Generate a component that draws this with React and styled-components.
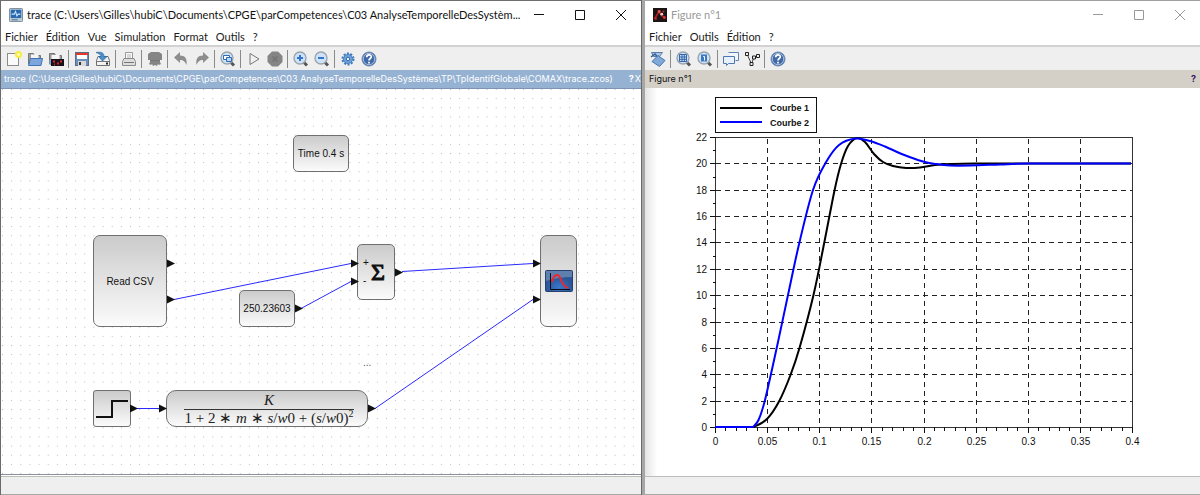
import React from 'react';
import styled, { createGlobalStyle } from 'styled-components';

const GlobalStyle = createGlobalStyle`
  * {
    box-sizing: border-box;
  }
  body {
    margin: 0;
    background: #a6a6a6;
    font-family: Lato, 'Open Sans', sans-serif;
  }
`;

const Desktop = styled.main`
  display: grid;
  grid-template-columns: 642fr 555fr;
  gap: 3px;
  min-height: 100vh;
`;

const Window = styled.section`
  display: flex;
  flex-direction: column;
  min-width: 0;
  background: #fff;
  border-top: 1px solid ${props => (props.$active ? '#6e6e6e' : '#a0a0a0')};
  border-left: ${props => (props.$active ? '1px solid #6a6a6a' : '0')};
  border-right: ${props => (props.$active ? '1px solid #6a6a6a' : '0')};
`;

const TitleBar = styled.header`
  display: flex;
  align-items: center;
  height: 28px;
  padding-left: 8px;
  color: ${props => (props.$active ? '#111' : '#999')};
  h1 {
    flex: 1;
    min-width: 0;
    margin: 0 -8px 0 4px;
    white-space: nowrap;
    font-size: 11px;
    font-weight: 400;
    line-height: 16px;
  }
`;

const WindowButton = styled.button`
  display: flex;
  align-items: center;
  justify-content: center;
  width: 41px;
  height: 27px;
  padding: 0;
  border: 0;
  background: transparent;
  color: inherit;
`;

const MenuBar = styled.nav`
  display: flex;
  gap: 8px;
  height: 18px;
  padding: 0 4px;
  border-bottom: 2px solid #d2d2d2;
  button {
    padding: 0;
    border: 0;
    background: transparent;
    color: #1a1a1a;
    font: inherit;
    font-size: 11px;
    line-height: 16px;
  }
`;

const ToolBar = styled.div`
  display: flex;
  align-items: center;
  height: 23px;
  padding-left: 2px;
  background: #efefef;
`;

const ToolButton = styled.button`
  display: flex;
  align-items: center;
  justify-content: center;
  width: 21px;
  height: 21px;
  padding: 0;
  border: 0;
  background: transparent;
`;

const Separator = styled.span`
  width: 1px;
  height: 18px;
  margin: 0 2px;
  background: #8a8a8a;
`;

const InfoBar = styled.div`
  display: flex;
  align-items: center;
  height: ${props => (props.$active ? 19 : 18)}px;
  padding: 0 ${props => (props.$active ? 0 : 3)}px 0 ${props => (props.$active ? 3 : 4)}px;
  overflow: hidden;
  white-space: nowrap;
  font-family: Inter, 'Liberation Sans', sans-serif;
  font-size: 9px;
  line-height: 16px;
  color: ${props => (props.$active ? '#fff' : '#111')};
  background: ${props => (props.$active ? '#96b2d3' : '#d4d0c8')};
  border-bottom: ${props => (props.$active ? '1px solid #7f94b4' : '0')};
  span {
    flex: 1;
    min-width: 0;
    overflow: hidden;
  }
  button {
    padding: 0 1px;
    border: 0;
    background: transparent;
    color: ${props => (props.$active ? '#fff' : '#3b1260')};
    font: inherit;
    font-weight: 700;
  }
  button + button {
    padding: 0;
    font-weight: 400;
  }
`;

const StatusBar = styled.footer`
  height: 19px;
  background: #efefef;
  border-top: 1px solid #bdbdbd;
  border-bottom: 1px solid #a8a8a8;
`;

const Canvas = styled.div`
  position: relative;
  flex: 1;
  min-height: 385px;
  margin-bottom: 1px;
  overflow: hidden;
  border-bottom: 1px solid #8d919e;
  font-family: 'Liberation Sans', Arial, sans-serif;
  font-size: 10px;
  color: #111;
`;

const Layer = styled.svg`
  position: absolute;
  top: 0;
  left: 0;
  width: 100%;
  height: 100%;
`;

const Block = styled.div`
  position: absolute;
  left: ${props => props.$x}px;
  top: ${props => props.$y}px;
  width: ${props => props.$w}px;
  height: ${props => props.$h}px;
  display: flex;
  align-items: center;
  justify-content: center;
  border: 1px solid #707070;
  border-radius: ${props => props.$radius || 5}px;
  background: linear-gradient(#cbcbcb, #fbfbfb);
  white-space: nowrap;
`;

const Signs = styled.div`
  display: flex;
  flex-direction: column;
  gap: 6px;
  width: 8px;
  line-height: 12px;
`;

const Sigma = styled.div`
  padding-right: 4px;
  font-family: 'Liberation Serif', serif;
  font-size: 24px;
  line-height: 32px;
  -webkit-text-stroke: 1px #111;
`;

const Fraction = styled.div`
  display: flex;
  flex-direction: column;
  align-items: center;
  padding: 1px 0 0 4px;
  font-family: 'Liberation Serif', serif;
  font-size: 15px;
  line-height: 17px;
  color: #222;
  div + div {
    padding: 0 1px;
    border-top: 1px solid #333;
  }
  sup {
    font-size: 10px;
    line-height: 1px;
  }
`;

const Note = styled.div`
  position: absolute;
  left: 362px;
  top: 268px;
  color: #555;
`;

const Figure = styled.div`
  flex: 1;
  background: linear-gradient(90deg, #e4e4e4, #fff 12px);
  svg {
    display: block;
    width: 100%;
  }
  text {
    font-family: 'Liberation Sans', Arial, sans-serif;
    font-size: 10px;
    fill: #111;
  }
  .legend text {
    font-size: 9px;
    font-weight: 700;
  }
`;

const Icon = ({ children, size = 16 }) => (
  <svg width={size} height={size} viewBox="0 0 16 16" fill="none" aria-hidden="true">
    {children}
  </svg>
);

const Lens = ({ children }) => (
  <Icon>
    <path d="M10.5 11l3.5 3.5" stroke="#555" strokeWidth="3" />
    <circle cx="7" cy="7" r="6" fill="#cfe3f8" stroke="#9aa4ae" strokeWidth="1.4" />
    {children}
  </Icon>
);

const icons = {
  new: (
    <Icon>
      <rect x="1.5" y="2.5" width="11" height="12" fill="#fafafa" stroke="#8c8c8c" />
      <circle cx="12.5" cy="3.5" r="3.5" fill="#f5ee3c" />
      <circle cx="12.5" cy="3.5" r="1.5" fill="#fffcc0" />
    </Icon>
  ),
  open: (
    <Icon>
      <path d="M1.5 13V2.5h5l1 2h6V9" fill="#9b9b9b" stroke="#757575" />
      <path d="M4 3.5h7.5v5H4z" fill="#f6f6f6" />
      <path d="M3.5 7.5h12L14 14.5H1.5z" fill="#7da7dc" stroke="#4273b5" />
    </Icon>
  ),
  demo: (
    <Icon>
      <path d="M1.5 13V2.5h5l1 2h6V9" fill="#9b9b9b" stroke="#757575" />
      <path d="M3.5 4h8v5h-8z" fill="#f6f6f6" />
      <path d="M1.5 9h3v5h-3z" fill="#7da7dc" />
      <rect x="3" y="8" width="13" height="7" fill="#16121c" />
      <path d="M5 10.5h2M9 12.5h2M12 10.5h2M6 13.5h1" stroke="#e02424" strokeWidth="2" />
    </Icon>
  ),
  save: (
    <Icon>
      <rect x="1.5" y="1.5" width="13" height="13" fill="#6b8fbd" stroke="#5b6c84" />
      <rect x="3" y="2" width="10" height="6" fill="#fff" />
      <path d="M2 3h12" stroke="#e23b2e" strokeWidth="2" />
      <rect x="4" y="10" width="8" height="5" fill="#d9d9d9" />
      <path d="M6 11v3" stroke="#333" strokeWidth="2" />
    </Icon>
  ),
  saveAs: (
    <Icon>
      <path d="M3 5.5h10l1.5 4v5h-13v-5z" fill="#f2f2f2" stroke="#6f6f6f" />
      <path d="M2 10.5h12" stroke="#777" />
      <path d="M11 12.5h2" stroke="#222" strokeWidth="2" />
      <path d="M1 1.5c5-1 8 0 8 4h3L7.5 10 3.5 5.5H6C6 3.5 4 2.5 1 1.5z" fill="#4b8fcb" stroke="#2b659f" strokeWidth=".7" />
    </Icon>
  ),
  print: (
    <Icon>
      <path d="M4.5 8V1.5h7V8" fill="#fafafa" stroke="#999" />
      <path d="M6 4h4M6 6h4" stroke="#b5b5b5" />
      <path d="M3 7.5h10l1.5 3v4h-13v-4z" fill="#ddd" stroke="#8b8b8b" />
      <path d="M3 11.5h10" stroke="#777" />
    </Icon>
  ),
  remove: (
    <Icon>
      <path d="M1 3l3-2h8l3 2v6h-2v2l1 2-2 1-1-1-1 2-2-1-2 1-1-2-1 1-2-1 1-2V9H1z" fill="#858585" />
      <path d="M3 9.5h10" stroke="#777" />
    </Icon>
  ),
  undo: (
    <Icon>
      <path d="M1 6.5L7 1v3.5c5 0 7.5 3 6.5 9.5C12 10.5 10.5 9 7 9v3z" fill="#8d8d8d" />
    </Icon>
  ),
  redo: (
    <Icon>
      <path d="M15 6.5L9 1v3.5C4 4.5 1.5 7.5 2.5 14 4 10.5 5.5 9 9 9v3z" fill="#8d8d8d" />
    </Icon>
  ),
  fit: (
    <Lens>
      <path d="M3.5 4.5h6v4h-6z" fill="#fff" stroke="#2e6bb5" />
      <path d="M6.5 6.5h5v4h-5z" fill="#bcd7f5" stroke="#2e6bb5" />
    </Lens>
  ),
  play: (
    <Icon>
      <path d="M4 2.5l9 5.5-9 5.5z" fill="#f1f1f1" stroke="#777" />
    </Icon>
  ),
  stop: (
    <Icon>
      <path d="M5 .5h6L15.5 5v6L11 15.5H5L.5 11V5z" fill="#858585" />
      <path d="M5.5 5.5l5 5M10.5 5.5l-5 5" stroke="#737373" strokeWidth="1.5" />
    </Icon>
  ),
  zoomIn: (
    <Lens>
      <path d="M4 7h6M7 4v6" stroke="#2f76cc" strokeWidth="2" />
    </Lens>
  ),
  zoomOut: (
    <Lens>
      <path d="M4 7h6" stroke="#2f76cc" strokeWidth="2" />
    </Lens>
  ),
  settings: (
    <Icon>
      <circle cx="8" cy="8" r="5.5" stroke="#3e78bd" strokeWidth="2" strokeDasharray="2 1.45" />
      <circle cx="8" cy="8" r="4.5" fill="#6fa0d8" stroke="#4780c3" />
      <circle cx="8" cy="8" r="1.7" fill="#e7f0fa" stroke="#386daf" />
    </Icon>
  ),
  help: (
    <Icon>
      <circle cx="8" cy="8" r="7" fill="#3e68a8" stroke="#6c87ae" />
      <circle cx="8" cy="8" r="5.7" stroke="#c4d4ea" strokeWidth=".8" />
      <path d="M5.7 6.2c0-3 4.6-3 4.6-.4C10.3 7.5 8 7.5 8 9.5M8 10.8v1.7" stroke="#fff" strokeWidth="1.7" />
    </Icon>
  ),
  rotate: (
    <Icon>
      <path d="M1.5 1.5h11l-3 4h-6z" fill="#a9c6e8" stroke="#5b7ba5" />
      <path d="M1 6l4-3 2.5 3" stroke="#345c90" strokeWidth="1.3" />
      <path d="M8 4.5l7 5-5.5 6-7.5-5z" fill="#80a8d9" stroke="#4a76ad" />
    </Icon>
  ),
  area: (
    <Lens>
      <path d="M3.5 3.5h7v7h-7zM3.5 6h7M3.5 8.3h7M6 3.5v7M8.3 3.5v7" stroke="#3467a9" />
    </Lens>
  ),
  original: (
    <Lens>
      <rect x="4" y="3.5" width="6" height="7" fill="#3c78bf" />
      <path d="M6.2 5.5h1.3v4" stroke="#fff" />
    </Lens>
  ),
  tips: (
    <Icon>
      <path d="M5.5 1.5h10v8h-3" fill="#f3f7fc" stroke="#5b84b8" />
      <path d="M.5 5.5h11v7h-6l-2 2v-2h-3z" fill="#e8f0fa" stroke="#4d79b2" />
    </Icon>
  ),
  edit: (
    <Icon>
      <path d="M3 3l4.5 10L10 6h4" stroke="#444" />
      <path d="M1.5 1.5h3v3h-3zM6 11.5h3v3H6zM8.5 5h3v3h-3zM12.5 3.5h3v3h-3z" fill="#eee" stroke="#222" />
    </Icon>
  ),
};

const xcosLogo = (
  <Icon size={14}>
    <rect x=".5" y=".5" width="15" height="15" rx="1" fill="#b9cdda" stroke="#6f7f8c" />
    <rect x="2" y="2" width="12" height="9.5" fill="#2d67ad" />
    <path d="M3 7h3l1.5-3L9 9l1.5-2H13" stroke="#c6ecff" strokeWidth="1.2" />
    <path d="M3 13.5h7" stroke="#4c6478" />
  </Icon>
);

const scilabLogo = (
  <Icon size={14}>
    <rect width="16" height="16" fill="#1c1414" />
    <path d="M2 12l5-8 3 5 4 2" stroke="#a31f22" strokeWidth="2" />
    <circle cx="7" cy="4" r="1.7" fill="#e9574e" />
    <circle cx="10" cy="7" r="1.6" fill="#f1cfcf" />
    <circle cx="13" cy="11" r="1.6" fill="#d33" />
    <circle cx="3" cy="12" r="1.5" fill="#c22" />
    <circle cx="12" cy="4" r="1.2" fill="#a33" />
  </Icon>
);

const WindowControls = () => (
  <>
    <WindowButton aria-label="Réduire">
      <svg width="10" height="10" stroke="currentColor"><path d="M0 4.5h10" /></svg>
    </WindowButton>
    <WindowButton aria-label="Agrandir">
      <svg width="10" height="10" stroke="currentColor" fill="none"><path d="M.5.5h9v9h-9z" /></svg>
    </WindowButton>
    <WindowButton aria-label="Fermer">
      <svg width="10" height="10" stroke="currentColor"><path d="M0 0l10 10M10 0L0 10" /></svg>
    </WindowButton>
  </>
);

const Menu = ({ items }) => (
  <MenuBar>
    {items.map(item => <button key={item}>{item}</button>)}
  </MenuBar>
);

// a separator stands between two groups of tools
const Tools = ({ groups }) => (
  <ToolBar role="toolbar">
    {groups.map((group, i) => (
      <React.Fragment key={i}>
        {i > 0 && <Separator />}
        {group.map(name => (
          <ToolButton key={name} aria-label={name}>{icons[name]}</ToolButton>
        ))}
      </React.Fragment>
    ))}
  </ToolBar>
);

const GRID = 64 / 7;

const wires = [
  [173, 210, 350, 174],
  [300, 219, 350, 192],
  [401, 182, 532, 174],
  [374, 319, 532, 210],
  [136, 319, 158, 319],
];

const ports = [
  [166, 174],
  [166, 210],
  [294, 219],
  [350, 174],
  [350, 192],
  [394, 183],
  [532, 174],
  [532, 210],
  [129, 319],
  [158, 319],
  [367, 319],
];

const Diagram = () => (
  <Canvas>
    <Layer>
      <defs>
        <pattern id="dots" x="1" y="0" width={GRID} height={GRID} patternUnits="userSpaceOnUse">
          <rect width="1" height="1" fill="#b8b8b8" />
        </pattern>
      </defs>
      <rect width="100%" height="100%" fill="url(#dots)" />
    </Layer>
    <Block $x={292} $y={46} $w={56} $h={37}>Time 0.4 s</Block>
    <Block $x={92} $y={146} $w={74} $h={92} $radius={7}>Read CSV</Block>
    <Block $x={238} $y={201} $w={56} $h={37}>250.23603</Block>
    <Block $x={356} $y={155} $w={38} $h={56}>
      <Signs>
        <span>+</span>
        <span>-</span>
      </Signs>
      <Sigma>Σ</Sigma>
    </Block>
    <Block $x={539} $y={146} $w={37} $h={92} $radius={7}>
      <svg width="28" height="22" viewBox="0 0 28 22" fill="none">
        <defs>
          <radialGradient id="screen" cy="80%">
            <stop offset="0" stopColor="#3a78cf" />
            <stop offset="1" stopColor="#2a5494" />
          </radialGradient>
        </defs>
        <rect x=".5" y=".5" width="27" height="21" rx="1" fill="url(#screen)" stroke="#24406e" />
        <path d="M1 1h26v6Q14 7 1 11z" fill="#fff" opacity=".25" />
        <path d="M5.5 3v16.5H25" stroke="#0a0a14" />
        <path d="M7 12c2-9 7-9 9-2 2 5 4 7 7 8" stroke="#f0262c" strokeWidth="2" />
      </svg>
    </Block>
    <Block $x={92} $y={301} $w={38} $h={37} $radius={3}>
      <svg width="34" height="22" fill="none" stroke="#111" strokeWidth="2">
        <path d="M1 19h16V3h16" />
      </svg>
    </Block>
    <Block $x={165} $y={301} $w={202} $h={37} $radius={10}>
      <Fraction>
        <div><i>K</i></div>
        <div>
          1 + 2 ∗ <i>m</i> ∗ <i>s</i>/<i>w</i>0 + (<i>s</i>/<i>w</i>0)<sup>2</sup>
        </div>
      </Fraction>
    </Block>
    <Note>...</Note>
    <Layer>
      {wires.map(([x1, y1, x2, y2]) => (
        <line key={`${x1}-${y1}`} x1={x1} y1={y1 + 0.5} x2={x2} y2={y2 + 0.5} stroke="#2a2aff" />
      ))}
      {ports.map(([x, y]) => (
        <path key={`${x}-${y}`} d={`M${x} ${y - 3.5}l8 4-8 4z`} fill="#111" />
      ))}
    </Layer>
  </Canvas>
);

const PLOT_W = 417;
const PLOT_H = 290;

const courbe1 = [
  [0, 290], [39, 290], [52, 282], [64, 264.5], [75.5, 238], [84.5, 211], [98.5, 158],
  [109.2, 106], [119.6, 53], [126, 27], [133, 9], [142, 1], [150, 5], [159, 17],
  [168, 25], [178, 29], [191, 31], [205, 30.5], [220, 28], [235, 27], [260, 26.5],
  [330, 26.5], [416, 26.5],
];

const courbe2 = [
  [0, 290], [38, 290], [43.5, 283], [50, 263], [61.7, 211], [73, 158], [84.3, 106], [98, 53],
  [110.5, 26], [124, 8], [140.5, 1.5], [155, 4], [170, 9.5], [188, 17.5], [208, 24.5],
  [221, 27], [235, 28.5], [255, 28.5], [285, 27.5], [315, 26.5], [416, 26.5],
];

// Catmull-Rom spline through the samples, written as cubic beziers
const smooth = points => points.reduce((d, p, i) => {
  if (i === 0) return `M${p[0]} ${p[1]}`;
  if (i === 1) return `${d}L${p[0]} ${p[1]}`;
  const a = points[i - 1];
  const before = i === 2 ? a : points[i - 2];
  const after = points[i + 1] || p;
  const c1 = [a[0] + (p[0] - before[0]) / 6, a[1] + (p[1] - before[1]) / 6];
  const c2 = [p[0] - (after[0] - a[0]) / 6, p[1] - (after[1] - a[1]) / 6];
  return `${d}C${c1.join(' ')} ${c2.join(' ')} ${p.join(' ')}`;
}, '');

const range = n => Array.from({ length: n }, (_, i) => i);
const px = n => Math.round(n) + 0.5;

const Chart = () => (
  <Figure>
    <svg viewBox="0 0 555 388" fill="none">
      <g className="legend">
        <rect x="70.5" y="9.5" width="101" height="35" stroke="#111" fill="#fff" />
        <path d="M75 20h42" stroke="#000" strokeWidth="2" />
        <path d="M75 34h42" stroke="#00f" strokeWidth="2" />
        <text x="125" y="23">Courbe 1</text>
        <text x="125" y="38">Courbe 2</text>
      </g>
      <g transform="translate(70 49)">
        <rect x=".5" y=".5" width={PLOT_W} height={PLOT_H} stroke="#333" />
        {range(9).map(i => {
          const x = px((i * PLOT_W) / 8);
          return (
            <g key={i}>
              {i > 0 && i < 8 && <path d={`M${x} 2V${PLOT_H}`} stroke="#222" strokeDasharray="5 4" />}
              <path d={`M${x} ${PLOT_H}v6`} stroke="#111" />
              <text x={x} y={PLOT_H + 18} textAnchor="middle">{Number((i * 0.05).toFixed(2))}</text>
            </g>
          );
        })}
        {range(41).map(i => (
          <path key={i} d={`M${px((i * PLOT_W) / 40)} ${PLOT_H}v4`} stroke="#111" />
        ))}
        {range(12).map(i => {
          const y = px(PLOT_H - (i * PLOT_H) / 11);
          return (
            <g key={i}>
              {i > 0 && i < 11 && <path d={`M1 ${y}H${PLOT_W}`} stroke="#222" strokeDasharray="5 4" />}
              <path d={`M-5 ${y}h6`} stroke="#111" />
              <text x="-8" y={y + 3} textAnchor="end">{i * 2}</text>
            </g>
          );
        })}
        {range(22).map(i => (
          <path key={i} d={`M-2 ${px(PLOT_H - (i * PLOT_H) / 22)}h3`} stroke="#111" />
        ))}
        <path d={smooth(courbe1)} stroke="#000" strokeWidth="2" />
        <path d={smooth(courbe2)} stroke="#00f" strokeWidth="2" />
      </g>
    </svg>
  </Figure>
);

const App = () => (
  <>
    <GlobalStyle />
    <Desktop>
      <Window $active>
        <TitleBar $active>
          {xcosLogo}
          <h1>{'trace (C:\\Users\\Gilles\\hubiC\\Documents\\CPGE\\parCompetences\\C03 AnalyseTemporelleDesSystèm...'}</h1>
          <WindowControls />
        </TitleBar>
        <Menu items={['Fichier', 'Édition', 'Vue', 'Simulation', 'Format', 'Outils', '?']} />
        <Tools
          groups={[
            ['new', 'open', 'demo'],
            ['save', 'saveAs'],
            ['print'],
            ['remove'],
            ['undo', 'redo'],
            ['fit'],
            ['play', 'stop'],
            ['zoomIn', 'zoomOut'],
            ['settings', 'help'],
          ]}
        />
        <InfoBar $active>
          <span>{'trace (C:\\Users\\Gilles\\hubiC\\Documents\\CPGE\\parCompetences\\C03 AnalyseTemporelleDesSystèmes\\TP\\TpIdentifGlobale\\COMAX\\trace.zcos)'}</span>
          <button>?</button>
          <button>X</button>
        </InfoBar>
        <Diagram />
        <StatusBar />
      </Window>
      <Window>
        <TitleBar>
          {scilabLogo}
          <h1>Figure n°1</h1>
          <WindowControls />
        </TitleBar>
        <Menu items={['Fichier', 'Outils', 'Édition', '?']} />
        <Tools groups={[['rotate'], ['area', 'original'], ['tips', 'edit'], ['help']]} />
        <InfoBar>
          <span>Figure n°1</span>
          <button>?</button>
        </InfoBar>
        <Chart />
        <StatusBar />
      </Window>
    </Desktop>
  </>
);

export default App;
